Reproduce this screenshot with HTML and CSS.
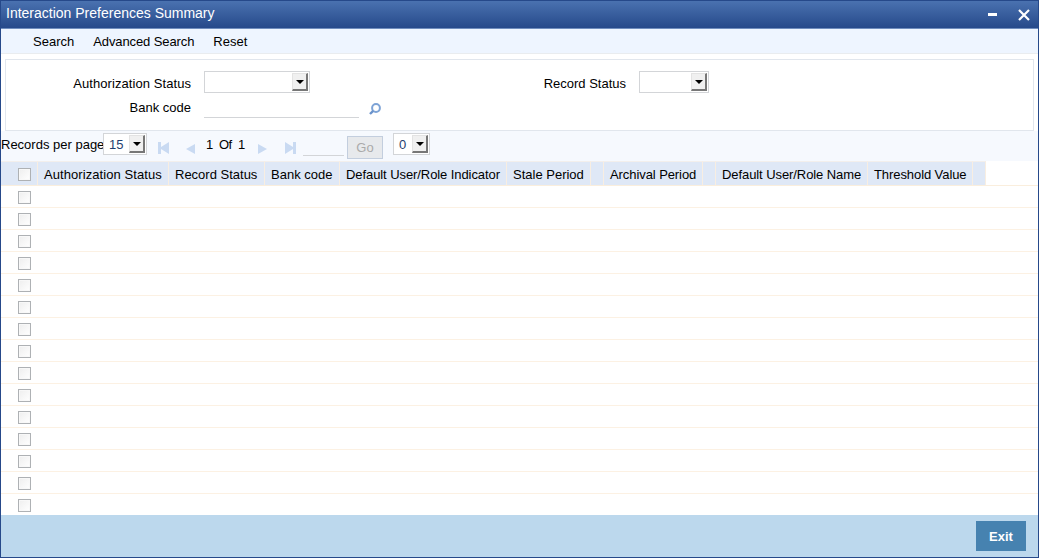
FILE: index.html
```html
<!DOCTYPE html>
<html lang="en">

<head>
    <meta charset="UTF-8">
    <meta name="viewport" content="width=device-width, initial-scale=1.0">
    <title>Interaction Preferences Summary</title>
    <link rel="stylesheet" href="styles.css">
</head>

<body>

    <div class="window">
        <div class="titlebar">
            <span class="title">Interaction Preferences Summary</span>
            <svg class="minimize" width="9" height="3"><rect width="9" height="3" fill="#fff"/></svg>
            <svg class="close" width="12" height="12" viewBox="0 0 12 12"><path d="M1 1L11 11M11 1L1 11" stroke="#fff" stroke-width="2.2"/></svg>
        </div>

        <div class="toolbar">
            <a>Search</a>
            <a class="advanced">Advanced Search</a>
            <a>Reset</a>
        </div>

        <div class="criteria">
            <div class="criteria-col left">
                <div class="field">
                    <label class="wide">Authorization Status</label>
                    <div class="select status"><span></span><i class="arrow"></i></div>
                </div>
                <div class="field">
                    <label>Bank code</label>
                    <div class="text-input"></div>
                    <svg class="lov" width="12" height="12" viewBox="0 0 12 12"><circle cx="7" cy="5" r="3.9" fill="none" stroke="#7da3d6" stroke-width="2"/><path d="M4.2 7.8L1 11" stroke="#6a93cc" stroke-width="2.4"/></svg>
                </div>
            </div>
            <div class="criteria-col right">
                <div class="field">
                    <label>Record Status</label>
                    <div class="select record"><span></span><i class="arrow"></i></div>
                </div>
            </div>
        </div>

        <div class="pager">
            <span class="per-page">Records per page</span>
            <div class="select size"><span>15</span><i class="arrow"></i></div>
            <svg class="first" width="11" height="12" viewBox="0 0 11 12"><path d="M0 0H3V5L11 0V12L3 7V12H0Z" fill="#c9daf2"/></svg>
            <svg class="prev" width="9" height="10" viewBox="0 0 9 10"><path d="M9 0V10L0 5Z" fill="#c9daf2"/></svg>
            <span class="page">1&nbsp; Of&nbsp; 1</span>
            <svg class="next" width="9" height="10" viewBox="0 0 9 10"><path d="M0 0V10L9 5Z" fill="#c9daf2"/></svg>
            <svg class="last" width="11" height="12" viewBox="0 0 11 12"><path d="M11 0H8V5L0 0V12L8 7V12H11Z" fill="#c9daf2"/></svg>
            <div class="goto"></div>
            <div class="go">Go</div>
            <div class="select lock"><span>0</span><i class="arrow"></i></div>
        </div>

        <div class="results">
            <div class="head">
                <div class="check"><i class="box"></i></div>
                <div class="wide">Authorization Status</div>
                <div>Record Status</div>
                <div>Bank code</div>
                <div class="tight">Default User/Role Indicator</div>
                <div>Stale Period</div>
                <div></div>
                <div class="tight">Archival Period</div>
                <div></div>
                <div class="tight">Default User/Role Name</div>
                <div class="tight">Threshold Value</div>
                <div></div>
            </div>
            <div class="row"><i class="box"></i></div>
            <div class="row"><i class="box"></i></div>
            <div class="row"><i class="box"></i></div>
            <div class="row"><i class="box"></i></div>
            <div class="row"><i class="box"></i></div>
            <div class="row"><i class="box"></i></div>
            <div class="row"><i class="box"></i></div>
            <div class="row"><i class="box"></i></div>
            <div class="row"><i class="box"></i></div>
            <div class="row"><i class="box"></i></div>
            <div class="row"><i class="box"></i></div>
            <div class="row"><i class="box"></i></div>
            <div class="row"><i class="box"></i></div>
            <div class="row"><i class="box"></i></div>
            <div class="row"><i class="box"></i></div>
        </div>

        <div class="footer">
            <div class="exit">Exit</div>
        </div>
    </div>

</body>

</html>
```
FILE: styles.css
```css
* {
    box-sizing: border-box;
}

body {
    margin: 0;
    font-family: "Liberation Sans", Arial, sans-serif;
    font-size: 13px;
    line-height: 16px;
    color: #000;
}

svg {
    display: block;
    flex: none;
}

.window {
    display: flex;
    flex-direction: column;
    width: 1039px;
    height: 558px;
    border: 1px solid #26498a;
    background-color: #fff;
    overflow: hidden;
}

.titlebar {
    display: flex;
    height: 28px;
    padding: 0 8px 0 5px;
    background: linear-gradient(#4a72b0, #26498a);
    border-bottom: 1px solid #6f8dbd;
    color: #fff;
}

.title {
    margin-top: 4px;
    font-size: 14px;
    flex: 1;
}

.minimize {
    margin: 12px 21px 0 0;
}

.close {
    margin-top: 8px;
}

.toolbar {
    display: flex;
    gap: 19px;
    height: 25px;
    padding: 5px 0 0 32px;
    background-color: #eef5ff;
    border-bottom: 1px solid #e9ecef;
}

.advanced {
    letter-spacing: -0.1px;
}

.criteria {
    display: flex;
    height: 72px;
    margin: 5px 4px 0;
    border: 1px solid #e1e6ed;
}

.criteria-col {
    padding-top: 11px;
}

.left {
    width: 435px;
}

.field {
    display: flex;
    height: 24px;
}

.field label {
    width: 185px;
    padding-top: 5px;
    margin-right: 13px;
    text-align: right;
}

.wide {
    letter-spacing: 0.07px;
}

.tight {
    letter-spacing: -0.08px;
}

.select {
    display: flex;
    justify-content: space-between;
    height: 22px;
    padding: 1px;
    border: 1px solid #d3d5d8;
    background-color: #fff;
    color: #1f3f70;
}

.select span {
    padding: 2px 0 0 4px;
}

.arrow {
    display: flex;
    align-items: center;
    justify-content: center;
    width: 16px;
    height: 18px;
    background-color: #f0f0f0;
    border: 1px solid #e3e3e3;
    border-right: 2px solid #777;
    border-bottom: 2px solid #777;
}

.arrow::before {
    content: "";
    border: 4px solid transparent;
    border-top-color: #000;
    border-bottom: 0;
}

.status {
    width: 106px;
}

.record {
    width: 70px;
}

.text-input {
    width: 155px;
    height: 23px;
    border-bottom: 1px solid #d3d5d8;
}

.lov {
    margin: 8px 0 0 10px;
}

.pager {
    display: flex;
    height: 30px;
    background-color: #f6f9fe;
}

.per-page {
    width: 102px;
    padding-top: 6px;
    white-space: nowrap;
}

.size {
    width: 44px;
    margin-top: 2px;
}

.first {
    margin: 11px 0 0 11px;
}

.prev {
    margin: 13px 0 0 17px;
}

.page {
    width: 52px;
    margin-left: 11px;
    padding-top: 6px;
    letter-spacing: -0.5px;
    white-space: nowrap;
}

.next {
    margin-top: 13px;
}

.last {
    margin: 11px 0 0 18px;
}

.goto {
    width: 41px;
    height: 25px;
    margin-left: 7px;
    border-bottom: 1px solid #d3d5d8;
}

.go {
    width: 36px;
    height: 23px;
    margin: 5px 0 0 3px;
    padding-top: 3px;
    border: 1px solid #c3cede;
    background-color: #e7e9ec;
    color: #aaa;
    text-align: center;
}

.lock {
    width: 37px;
    margin: 2px 0 0 10px;
}

.results {
    height: 354px;
    overflow: hidden;
}

.head {
    display: grid;
    grid-template-columns: 37px 131px 96px 75px 167px 84px 13px 99px 13px 152px 105px 13px;
    height: 25px;
    border-bottom: 1px solid #faeedd;
}

.head div {
    padding: 5px 0 0 6px;
    background-color: #dfe8f6;
    border-top: 1px solid #f3efec;
    border-right: 1px solid #f8eee2;
    white-space: nowrap;
}

.head .check {
    padding: 6px 0 0 17px;
}

.box {
    display: block;
    width: 13px;
    height: 13px;
    border: 1px solid #aeb1b4;
    background: linear-gradient(135deg, #eee, #fff);
    box-shadow: inset 0 0 0 1px #f8f8f8;
}

.row {
    height: 22px;
    padding: 5px 0 0 17px;
    border-bottom: 1px solid #fcf1e3;
}

.footer {
    display: flex;
    justify-content: flex-end;
    height: 42px;
    padding: 6px 12px 0 0;
    background-color: #bcd8ed;
}

.exit {
    width: 50px;
    height: 30px;
    padding-top: 8px;
    background-color: #4682b0;
    color: #fff;
    font-weight: bold;
    text-align: center;
}
```
